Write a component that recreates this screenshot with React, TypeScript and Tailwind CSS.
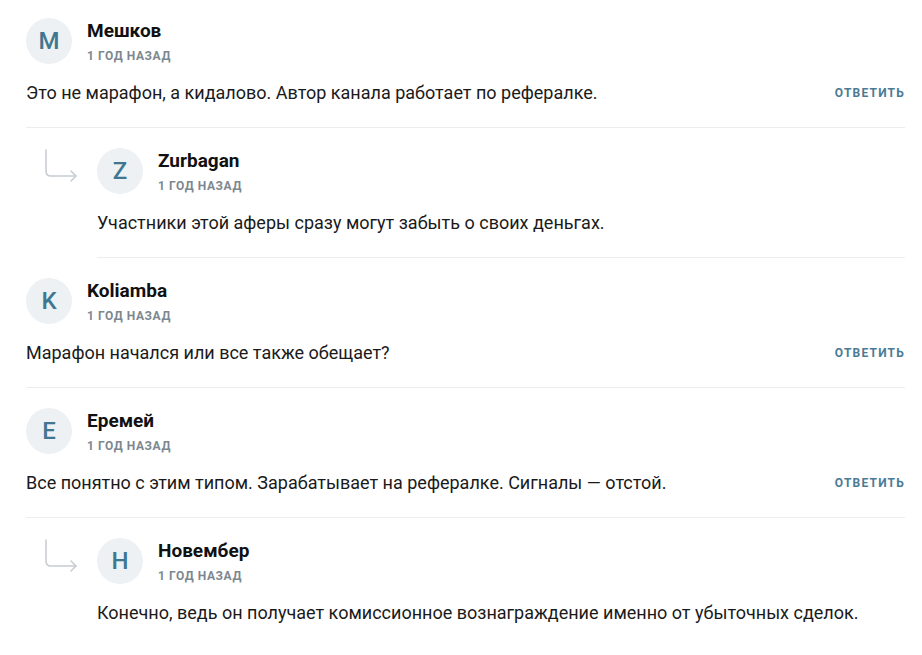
const comments = [
  {
    id: 1,
    letter: "М",
    name: "Мешков",
    time: "1 год назад",
    text: "Это не марафон, а кидалово. Автор канала работает по рефералке.",
    replies: [
      {
        id: 11,
        letter: "Z",
        name: "Zurbagan",
        time: "1 год назад",
        text: "Участники этой аферы сразу могут забыть о своих деньгах.",
      },
    ],
  },
  {
    id: 2,
    letter: "K",
    name: "Koliamba",
    time: "1 год назад",
    text: "Марафон начался или все также обещает?",
    replies: [],
  },
  {
    id: 3,
    letter: "Е",
    name: "Еремей",
    time: "1 год назад",
    text: "Все понятно с этим типом. Зарабатывает на рефералке. Сигналы — отстой.",
    replies: [
      {
        id: 31,
        letter: "Н",
        name: "Новембер",
        time: "1 год назад",
        text: "Конечно, ведь он получает комиссионное вознаграждение именно от убыточных сделок.",
      },
    ],
  },
];

type Item = { id: number; letter: string; name: string; time: string; text: string };

const ReplyArrow = () => (
  <svg
    width="34"
    height="34"
    viewBox="0 0 34 34"
    fill="none"
    stroke="#c6ccd1"
    strokeWidth="1.5"
    strokeLinecap="round"
    strokeLinejoin="round"
    className="absolute left-[-52px] top-[21px]"
  >
    <path d="M1 1 V22 Q1 27 6 27 H31" />
    <path d="M26 22 L31 27 L26 32" />
  </svg>
);

const Comment = ({ item, reply, last }: { item: Item; reply?: boolean; last?: boolean }) => (
  <div
    className={`relative pt-[20px] pb-[22px] ${reply ? "ml-[71px]" : ""} ${
      last ? "" : "border-b border-[#ebedef]"
    }`}
  >
    {reply && <ReplyArrow />}
    <div className="flex h-[46px] items-center gap-[15px]">
      <div className="flex h-[46px] w-[46px] items-center justify-center rounded-full bg-[#edf1f4] text-[24px] font-medium text-[#3f7791]">
        {item.letter}
      </div>
      <div className="flex flex-col">
        <span className="text-[19px] font-bold leading-[22px] text-[#111]">{item.name}</span>
        <span className="mt-[7px] text-[12px] font-bold uppercase leading-[14px] tracking-[0.6px] text-[#7d8790]">
          {item.time}
        </span>
      </div>
    </div>
    <div className="mt-[17px] flex items-center justify-between">
      <p className="text-[18px] leading-6 text-[#1a1a1a]">{item.text}</p>
      {!reply && (
        <button className="text-[12px] font-bold uppercase tracking-[1.2px] text-[#4b7a93]">
          Ответить
        </button>
      )}
    </div>
  </div>
);

export default function App() {
  return (
    <div className="min-h-screen bg-white pl-[26px] pr-[17px] font-['Roboto',sans-serif]">
      <div className="mt-[-2px]">
        {comments.map((c, ci) => (
          <div key={c.id}>
            <Comment item={c} />
            {c.replies.map((r) => (
              <Comment key={r.id} item={r} reply last={ci === comments.length - 1} />
            ))}
          </div>
        ))}
      </div>
    </div>
  );
}
